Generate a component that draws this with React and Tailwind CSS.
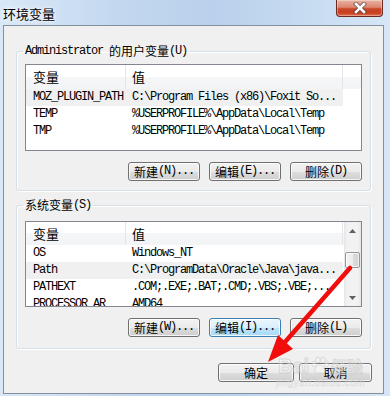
import React from "react";

const MONO = "font-['Liberation_Mono','Noto_Sans_CJK_SC',monospace] text-[12px] tracking-[-1.2px]";

function C({ children, className = "" }) {
  return (
    <span className={"font-['Noto_Sans_CJK_SC',sans-serif] text-[12px] tracking-normal " + className}>
      {children}
    </span>
  );
}

function Btn({ w, children, focus = false }) {
  return (
    <div
      className={
        "h-[19px] rounded-[3px] border flex items-center justify-center text-black leading-[17px] shadow-[inset_0_0_0_1px_rgba(255,255,255,0.8)] " +
        (focus
          ? "border-[#3c7fb1] bg-[linear-gradient(#eaf6fd_0%,#d9f0fc_50%,#bee6fd_51%,#a7d9f5_100%)]"
          : "border-[#707070] bg-[linear-gradient(#f2f2f2_0%,#ebebeb_50%,#dddddd_51%,#cfcfcf_100%)]") +
        " " +
        w
      }
    >
      <span className={MONO + " whitespace-nowrap leading-[17px] flex items-center h-[17px]"}>{children}</span>
    </div>
  );
}

function Header({ h }) {
  return (
    <div className={"flex bg-[linear-gradient(#ffffff_0%,#ffffff_50%,#f5f6f7_50%,#f3f4f5_100%)] shrink-0 " + h}>
      <div className="w-[100px] border-r border-[#e3e5e8] pl-[7px] flex items-center">
        <C className="leading-[20px] text-[13px]">变量</C>
      </div>
      <div className="w-[217px] pl-[6px] flex items-center border-r border-[#e3e5e8]">
        <C className="leading-[20px] text-[13px]">值</C>
      </div>
      <div className="flex-1" />
    </div>
  );
}

function Row({ a, b, sel = false }) {
  return (
    <div className={"h-[17px] flex w-[317px] shrink-0 " + (sel ? "bg-[#f0f0f0]" : "")}>
      <div className={"w-[100px] pl-[7px] leading-[17px] whitespace-nowrap overflow-hidden " + MONO}>{a}</div>
      <div className={"w-[217px] pl-[6px] leading-[17px] whitespace-nowrap overflow-hidden " + MONO}>{b}</div>
    </div>
  );
}

function Scrollbar() {
  return (
    <div className="w-[17px] h-full flex flex-col bg-[linear-gradient(90deg,#e6e6e6_0%,#f2f2f2_20%,#f2f2f2_80%,#e6e6e6_100%)] shrink-0">
      <div className="h-[17px] flex items-center justify-center shrink-0">
        <svg width="7" height="4" viewBox="0 0 7 4">
          <path d="M0 4 L3.5 0 L7 4 Z" fill="#606060" />
        </svg>
      </div>
      <div className="flex-1 flex flex-col items-center">
        <div className="mt-[13px] w-[15px] h-[16px] rounded-[2px] border border-[#979797] bg-[linear-gradient(90deg,#f3f3f3_0%,#ececec_50%,#dcdcdc_51%,#d3d3d3_100%)] shadow-[inset_0_0_0_1px_rgba(255,255,255,0.7)]" />
      </div>
      <div className="h-[17px] flex items-center justify-center shrink-0">
        <svg width="7" height="4" viewBox="0 0 7 4">
          <path d="M0 0 L3.5 4 L7 0 Z" fill="#606060" />
        </svg>
      </div>
    </div>
  );
}

export default function App() {
  return (
    <div className="w-[390px] h-[396px] relative overflow-hidden bg-[linear-gradient(90deg,#d9e8f7_0%,#c3d8ef_30%,#b9d1ec_55%,#c8dcf1_80%,#d6e6f6_100%)] flex flex-col">
      {/* title bar */}
      <div className="h-[25px] flex items-start justify-between shrink-0">
        <div className="pl-[3px] pt-[1px]">
          <span className="font-['Noto_Sans_CJK_SC',sans-serif] text-[13px] leading-[18px] text-black [text-shadow:0_0_6px_#ffffff,0_0_3px_#ffffff]">
            环境变量
          </span>
        </div>
        <div className="mr-[7px] w-[47px] h-[17px] rounded-b-[4px] border border-t-0 border-[#6a2a1f] bg-[linear-gradient(#eab2a3_0%,#dc8770_45%,#c7462a_55%,#c93f1f_80%,#e0704c_100%)] shadow-[inset_0_0_0_1px_rgba(255,255,255,0.35)] flex items-center justify-center">
          <svg width="16" height="12" viewBox="0 0 16 12">
            <path d="M4 2 L12 10 M12 2 L4 10" stroke="#3b3b3b" strokeWidth="4.2" strokeLinecap="square" fill="none" opacity="0.7" />
            <path d="M4 2 L12 10 M12 2 L4 10" stroke="#ffffff" strokeWidth="2.6" strokeLinecap="square" fill="none" />
          </svg>
        </div>
      </div>

      {/* client */}
      <div className="ml-[3px] w-[381px] h-[369px] border border-[#84909e] bg-[#f0f0f0] flex flex-col shrink-0">
        {/* user vars */}
        <fieldset className="mx-[12px] mt-[18px] border border-[#d5dfe5] rounded-[3px] shadow-[inset_1px_1px_0_#ffffff,1px_1px_0_#ffffff] px-[8px] pt-[6px] pb-[9px] min-w-0">
          <legend className="ml-[-2px] px-[2px] h-[14px] flex items-center whitespace-nowrap">
            <span className={MONO + " leading-[14px]"}>Administrator&nbsp;</span>
            <C className="leading-[14px]">的用户变量</C>
            <span className={MONO + " leading-[14px]"}>(U)</span>
          </legend>
          <div className="h-[87px] border border-[#828790] bg-white flex flex-col overflow-hidden">
            <Header h="h-[24px]" />
            <Row a="MOZ_PLUGIN_PATH" b="C:\Program Files (x86)\Foxit So..." sel />
            <Row a="TEMP" b="%USERPROFILE%\AppData\Local\Temp" />
            <Row a="TMP" b="%USERPROFILE%\AppData\Local\Temp" />
          </div>
          <div className="mt-[11px] flex justify-end gap-[9px]">
            <Btn w="w-[72px]"><C className="leading-[17px]">新建</C>(N)...</Btn>
            <Btn w="w-[72px]"><C className="leading-[17px]">编辑</C>(E)...</Btn>
            <Btn w="w-[72px]"><C className="leading-[17px]">删除</C>(D)</Btn>
          </div>
        </fieldset>

        {/* system vars */}
        <fieldset className="mx-[12px] mt-[7px] border border-[#d5dfe5] rounded-[3px] shadow-[inset_1px_1px_0_#ffffff,1px_1px_0_#ffffff] px-[8px] pt-[9px] pb-[11px] min-w-0">
          <legend className="ml-[-2px] px-[2px] h-[14px] flex items-center whitespace-nowrap">
            <C className="leading-[14px]">系统变量</C>
            <span className={MONO + " leading-[14px]"}>(S)</span>
          </legend>
          <div className="h-[86px] border border-[#828790] bg-white flex overflow-hidden">
            <div className="flex-1 flex flex-col overflow-hidden">
              <Header h="h-[23px]" />
              <Row a="OS" b="Windows_NT" />
              <Row a="Path" b="C:\ProgramData\Oracle\Java\java..." sel />
              <Row a="PATHEXT" b=".COM;.EXE;.BAT;.CMD;.VBS;.VBE;..." />
              <Row a="PROCESSOR_AR" b="AMD64" />
            </div>
            <Scrollbar />
          </div>
          <div className="mt-[11px] flex justify-end gap-[9px]">
            <Btn w="w-[72px]"><C className="leading-[17px]">新建</C>(W)...</Btn>
            <Btn w="w-[72px]" focus><C className="leading-[17px]">编辑</C>(I)...</Btn>
            <Btn w="w-[72px]"><C className="leading-[17px]">删除</C>(L)</Btn>
          </div>
        </fieldset>

        {/* OK / Cancel */}
        <div className="mt-[14px] pr-[11px] flex justify-end gap-[5px]">
          <Btn w="w-[76px]"><C className="leading-[17px]">确定</C></Btn>
          <Btn w="w-[73px]"><C className="leading-[17px]">取消</C></Btn>
        </div>
      </div>

      {/* Baidu watermark */}
      <div className="absolute left-[276px] top-[355px] flex flex-col items-center opacity-60 pointer-events-none">
        <div className="flex items-center">
          <span className="font-['Liberation_Sans',sans-serif] font-bold text-[20px] leading-[22px] text-white/50 [-webkit-text-stroke:1px_#c9c9c9]">Bai</span>
          <svg width="20" height="20" viewBox="0 0 20 20" className="mx-[1px]">
            <g fill="rgba(255,255,255,0.5)" stroke="#c9c9c9" strokeWidth="1">
              <ellipse cx="4" cy="8" rx="2.2" ry="2.8" />
              <ellipse cx="8" cy="4" rx="2.2" ry="2.8" />
              <ellipse cx="13" cy="4" rx="2.2" ry="2.8" />
              <ellipse cx="16.5" cy="8" rx="2.2" ry="2.8" />
              <path d="M10 9 C6 9 4 14 5 16 C6 18 9 17 10 17 C11 17 14 18 15 16 C16 14 14 9 10 9 Z" />
            </g>
          </svg>
          <span className="font-['Noto_Sans_CJK_SC',sans-serif] font-bold text-[16px] leading-[22px] text-white/50 [-webkit-text-stroke:1px_#c9c9c9]">经验</span>
        </div>
        <span className="font-['Liberation_Sans',sans-serif] text-[10px] leading-[12px] text-white/60 [-webkit-text-stroke:0.5px_#cfcfcf] tracking-[0.5px]">jingyan.baidu.com</span>
      </div>

      {/* red arrow */}
      <svg className="absolute left-0 top-0 pointer-events-none" width="390" height="396" viewBox="0 0 390 396">
        <line x1="350" y1="268" x2="285" y2="342" stroke="#f20d0d" strokeWidth="4.5" strokeLinecap="round" />
        <polygon points="268,362 278,335 293,349" fill="#f20d0d" />
      </svg>
    </div>
  );
}
